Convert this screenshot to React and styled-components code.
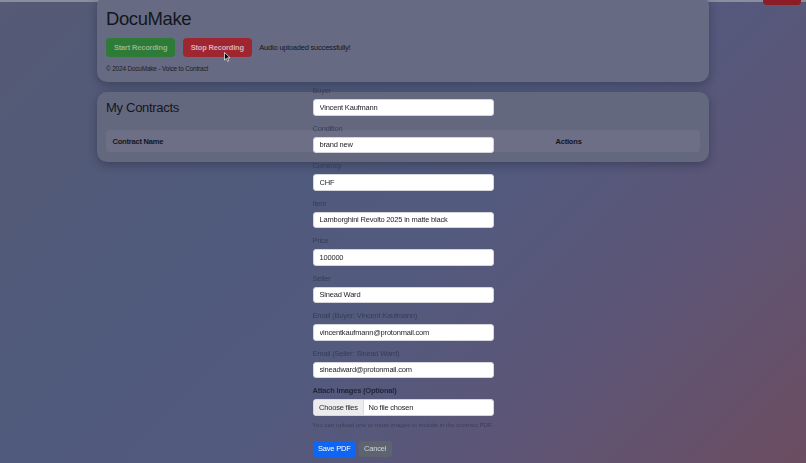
import React from "react";
import styled, {createGlobalStyle} from "styled-components";

const GlobalStyle = createGlobalStyle`
  html, body {
    margin: 0;
    padding: 0;
  }

  body {
    font-family: "Liberation Sans", Arial, sans-serif;
    background: #535a76;
    overflow: hidden;
  }

  * {
    box-sizing: border-box;
  }
`;

const Page = styled.div`
  min-height: 463px;
  height: 100vh;
  border-top: 2px solid #8a8d9e;
  background: linear-gradient(135deg, #555a75 0%, #505a7c 35%, #535a7e 55%, #5d5576 75%, #6c4d61 100%);
`;

const Container = styled.main`
  width: 612px;
  margin: -6px auto 0;
  display: flex;
  flex-direction: column;
  gap: 10px;
`;

const Card = styled.section`
  background: ${p => p.$tone || "#666a82"};
  border-radius: 10px;
  box-shadow: 0 3px 10px rgba(20, 22, 40, 0.35);
  padding: ${p => p.$padding};
  display: flex;
  flex-direction: column;
`;

const Title = styled.h1`
  margin: 0;
  font-size: 18.5px;
  line-height: 20px;
  font-weight: 400;
  color: #14161e;
  letter-spacing: -0.4px;
`;

const RecordRow = styled.div`
  margin-top: 9px;
  display: flex;
  align-items: center;
  gap: 7.5px;
`;

const RecordButton = styled.button`
  height: 19px;
  padding: 0 8px;
  border: none;
  border-radius: 4px;
  font-family: inherit;
  font-size: 7.5px;
  letter-spacing: -0.2px;
  font-weight: 700;
  background: ${p => (p.$variant === "stop" ? "#9f2630" : "#2e7a37")};
  color: ${p => (p.$variant === "stop" ? "#d8b2b7" : "#8fb496")};
  cursor: pointer;
`;

const Status = styled.span`
  font-size: 7.5px;
  letter-spacing: -0.2px;
  color: #15171f;
`;

const Footer = styled.p`
  margin: 8px 0 0;
  font-size: 6.4px;
  letter-spacing: -0.15px;
  line-height: 8px;
  color: #1c1e28;
`;

const SectionTitle = styled.h2`
  margin: 0;
  font-size: 13px;
  line-height: 15px;
  letter-spacing: -0.3px;
  font-weight: 400;
  color: #14161e;
`;

const TableHead = styled.div`
  margin-top: 15.5px;
  height: 22px;
  border-radius: 4px;
  background: #6c6f86;
  display: grid;
  grid-template-columns: 248px 195px 1fr;
  align-items: center;
`;

const HeadCell = styled.div`
  padding-left: 6.5px;
  font-size: 7.5px;
  letter-spacing: -0.2px;
  font-weight: 700;
  color: #14161d;
`;

const Overlay = styled.div`
  position: fixed;
  inset: 0;
  display: flex;
  justify-content: center;
  padding-top: 86px;
`;

const Form = styled.form`
  width: 181px;
  display: flex;
  flex-direction: column;
`;

const Field = styled.div`
  display: flex;
  flex-direction: column;
  gap: 4px;
  margin-bottom: 8px;
`;

const Label = styled.label`
  font-size: 7.5px;
  letter-spacing: -0.2px;
  line-height: 9px;
  color: ${p => (p.$strong ? "#21263a" : "#383d56")};
  font-weight: ${p => (p.$strong ? 700 : 400)};
`;

const TextInput = styled.input`
  height: 16.5px;
  width: 100%;
  padding: 0 6px;
  border: 1px solid #d4d6dc;
  border-radius: 3px;
  background: #ffffff;
  font-family: inherit;
  font-size: 7.5px;
  letter-spacing: -0.2px;
  color: #1e1f24;
  outline: none;
`;

const FilePicker = styled.label`
  height: 16.5px;
  display: flex;
  align-items: center;
  border: 1px solid #d4d6dc;
  border-radius: 3px;
  background: #ffffff;
  overflow: hidden;
  font-size: 7.5px;
  letter-spacing: -0.2px;
  color: #1e1f24;
`;

const FileButton = styled.span`
  height: 100%;
  width: 50px;
  display: flex;
  align-items: center;
  padding-left: 5.5px;
  background: #ececef;
  border-right: 1px solid #dadbe0;
  color: #2a2b30;
`;

const FileName = styled.span`
  padding-left: 5px;
`;

const Hint = styled.small`
  margin-top: -1.5px;
  font-size: 6.1px;
  line-height: 6px;
  color: #3b4058;
  white-space: nowrap;
`;

const Actions = styled.div`
  margin-top: 12.5px;
  display: flex;
  gap: 2.5px;
`;

const ActionButton = styled.button`
  height: 16px;
  padding: 0 5.5px;
  border: none;
  border-radius: 3px;
  font-family: inherit;
  font-size: 7.5px;
  letter-spacing: -0.2px;
  background: ${p => (p.$primary ? "#0f66f4" : "#5d6470")};
  color: ${p => (p.$primary ? "#ffffff" : "#d2d5da")};
  cursor: pointer;
`;

const LogoutButton = styled.button`
  position: fixed;
  top: -14px;
  right: 5px;
  width: 38px;
  height: 19px;
  border: none;
  border-radius: 4px;
  background: #8c1c25;
`;

const Pointer = styled.svg`
  position: fixed;
  left: 224px;
  top: 52px;
  width: 7px;
  height: 10px;
`;

const fields = [
  {label: "Buyer", value: "Vincent Kaufmann"},
  {label: "Condition", value: "brand new"},
  {label: "Currency", value: "CHF"},
  {label: "Item", value: "Lamborghini Revolto 2025 in matte black"},
  {label: "Price", value: "100000"},
  {label: "Seller", value: "Sinead Ward"},
  {label: "Email (Buyer: Vincent Kaufmann)", value: "vincentkaufmann@protonmail.com"},
  {label: "Email (Seller: Sinead Ward)", value: "sineadward@protonmail.com"},
];

const ContractForm = () => (
  <Overlay>
    <Form onSubmit={e => e.preventDefault()}>
      {fields.map(f => (
        <Field key={f.label}>
          <Label>{f.label}</Label>
          <TextInput defaultValue={f.value} />
        </Field>
      ))}
      <Field>
        <Label $strong>Attach Images (Optional)</Label>
        <FilePicker>
          <FileButton>Choose files</FileButton>
          <FileName>No file chosen</FileName>
        </FilePicker>
      </Field>
      <Hint>You can upload one or more images to include in the contract PDF.</Hint>
      <Actions>
        <ActionButton $primary type="submit">Save PDF</ActionButton>
        <ActionButton type="button">Cancel</ActionButton>
      </Actions>
    </Form>
  </Overlay>
);

export default function App() {
  return (
    <>
      <GlobalStyle />
      <Page>
        <Container>
          <Card $padding="13px 9px 9px">
            <Title>DocuMake</Title>
            <RecordRow>
              <RecordButton>Start Recording</RecordButton>
              <RecordButton $variant="stop">Stop Recording</RecordButton>
              <Status>Audio uploaded successfully!</Status>
            </RecordRow>
            <Footer>© 2024 DocuMake - Voice to Contract</Footer>
          </Card>
          <Card $tone="#64687f" $padding="7.5px 9px 9.5px">
            <SectionTitle>My Contracts</SectionTitle>
            <TableHead>
              <HeadCell>Contract Name</HeadCell>
              <HeadCell>Created At</HeadCell>
              <HeadCell>Actions</HeadCell>
            </TableHead>
          </Card>
        </Container>
        <LogoutButton aria-label="Logout" />
      </Page>
      <ContractForm />
      <Pointer viewBox="0 0 7 10">
        <path d="M0.5 0.5 L0.5 8 L2.3 6.3 L3.6 9.3 L4.8 8.8 L3.5 5.8 L6 5.8 Z" fill="#000" stroke="#fff" strokeWidth="0.7" />
      </Pointer>
    </>
  );
}
